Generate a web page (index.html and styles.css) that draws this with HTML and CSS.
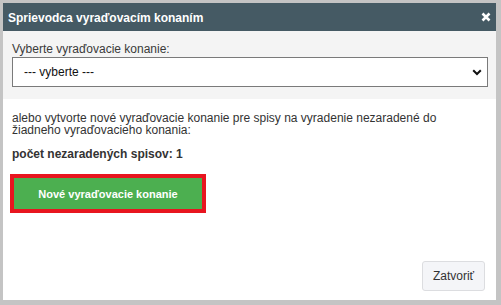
FILE: index.html
```html
<!DOCTYPE html>
<html lang="sk">
<head>
<meta charset="utf-8">
<title>Sprievodca vyraďovacím konaním</title>
<link rel="stylesheet" href="styles.css">
</head>
<body>
<div class="dialog">
  <div class="titlebar">
    <span class="title">Sprievodca vyraďovacím konaním</span>
    <svg class="close" width="10" height="10" viewBox="0 0 10 10" aria-label="Zavrieť">
      <path d="M1.5 1.5 L8.5 8.5 M8.5 1.5 L1.5 8.5" stroke="#fff" stroke-width="2.6" stroke-linecap="butt"/>
    </svg>
  </div>
  <div class="choose">
    <label class="label" for="sel">Vyberte vyraďovacie konanie:</label>
    <div class="select-wrap">
      <select id="sel" class="select">
        <option>--- vyberte ---</option>
      </select>
      <svg class="chev" width="10" height="7" viewBox="0 0 10 7">
        <path d="M1.2 1.2 L5 5 L8.8 1.2" fill="none" stroke="#111" stroke-width="2"/>
      </svg>
    </div>
  </div>
  <div class="content">
    <p class="desc">alebo vytvorte nové vyraďovacie konanie pre spisy na vyradenie nezaradené do žiadneho vyraďovacieho konania:</p>
    <p class="count">počet nezaradených spisov: 1</p>
    <div class="actions">
      <button class="btn-new">Nové vyraďovacie konanie</button>
    </div>
    <div class="footer">
      <button class="btn-close">Zatvoriť</button>
    </div>
  </div>
</div>
</body>
</html>
```

FILE: styles.css
```css
html, body {
  margin: 0;
  padding: 0;
}
body {
  background: #c4c4c4;
  width: 501px;
  height: 305px;
  font-family: "Liberation Sans", Arial, sans-serif;
  overflow: hidden;
}
.dialog {
  margin: 3px 5px 5px 3px;
  width: 493px;
  height: 297px;
  background: #fff;
  display: flex;
  flex-direction: column;
}
.titlebar {
  height: 28px;
  flex: 0 0 28px;
  background: #455a64;
  color: #fff;
  display: flex;
  align-items: center;
  justify-content: space-between;
  padding: 0 5px 0 5px;
}
.title {
  font-weight: bold;
  font-size: 12px;
  padding-top: 1px;
}
.close {
  display: block;
}
.choose {
  background: #f4f4f4;
  padding: 11px 8px 12px 9px;
}
.label {
  display: block;
  font-size: 12px;
  line-height: 14px;
  color: #3a3a3a;
  margin-bottom: 1px;
}
.select-wrap {
  position: relative;
}
.select {
  display: block;
  width: 100%;
  height: 30px;
  box-sizing: border-box;
  -webkit-appearance: none;
  appearance: none;
  background: #fff;
  border: 1px solid #7a7a7a;
  border-radius: 0;
  padding: 0 11px;
  font-family: "Liberation Sans", Arial, sans-serif;
  font-size: 12px;
  color: #111;
}
.chev {
  position: absolute;
  right: 6px;
  top: 12px;
  pointer-events: none;
}
.content {
  flex: 1;
  display: flex;
  flex-direction: column;
  padding: 13px 11px 9px 9px;
}
.desc {
  margin: 0;
  font-size: 12px;
  line-height: 12px;
  color: #333;
}
.count {
  margin: 11px 0 0 0;
  font-size: 12px;
  line-height: 14px;
  font-weight: bold;
  color: #333;
}
.actions {
  margin-top: 17px;
}
.btn-new {
  margin-left: 2px;
  width: 188px;
  height: 31px;
  background: #4caf50;
  color: #fff;
  border: none;
  outline: 4px solid #e8151f;
  font-family: "Liberation Sans", Arial, sans-serif;
  font-weight: bold;
  font-size: 11px;
  padding: 0;
}
.footer {
  margin-top: auto;
  display: flex;
  justify-content: flex-end;
}
.btn-close {
  width: 63px;
  height: 30px;
  background: #f4f5f8;
  border: 1px solid #dcdde0;
  border-radius: 3px;
  font-family: "Liberation Sans", Arial, sans-serif;
  font-size: 12px;
  color: #333;
  padding: 0;
}
```
